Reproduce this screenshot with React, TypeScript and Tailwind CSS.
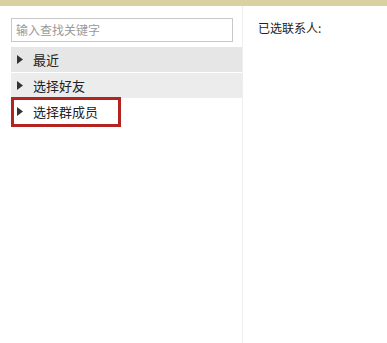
const font = { fontFamily: '"Noto Sans CJK SC", "Noto Sans", sans-serif' };

function Caret() {
  return (
    <svg width="6" height="9" viewBox="0 0 6 9" className="shrink-0">
      <path d="M0 0 L6 4.5 L0 9 Z" fill="#333" />
    </svg>
  );
}

type Row = { label: string; bg: string; marked?: boolean };

const rows: Row[] = [
  { label: "最近", bg: "bg-[#e6e6e6]" },
  { label: "选择好友", bg: "bg-[#ececec]" },
  { label: "选择群成员", bg: "bg-white", marked: true },
];

export default function App() {
  return (
    <div className="w-[387px] h-[343px] bg-white overflow-hidden flex flex-col text-[12px] text-[#222]" style={font}>
      <div className="h-[6px] shrink-0 bg-[#d9d1a2]" />
      <div className="flex flex-1">
        <div className="w-[243px] shrink-0 border-r border-[#eeeeee] pl-[11px] pt-[12px]">
          <div className="w-[222px] h-[24px] border border-[#c8c8c8] flex items-center px-[4px] text-[#9a9a9a]">
            输入查找关键字
          </div>
          <div className="mt-[5px] flex flex-col">
            {rows.map((r) => (
              <div key={r.label} className={`relative h-[26px] ${r.bg} flex items-center gap-[10px] pl-[6px] border-b border-white`}>
                <Caret />
                <span className="text-[13px] leading-none">{r.label}</span>
                {r.marked && (
                  <div className="absolute left-0 top-[-2px] w-[110px] h-[30px] border-[3px] border-[#b3231f]" />
                )}
              </div>
            ))}
          </div>
        </div>
        <div className="flex-1 pl-[15px] pt-[13px]">
          <span className="text-[12px]">已选联系人:</span>
        </div>
      </div>
    </div>
  );
}
